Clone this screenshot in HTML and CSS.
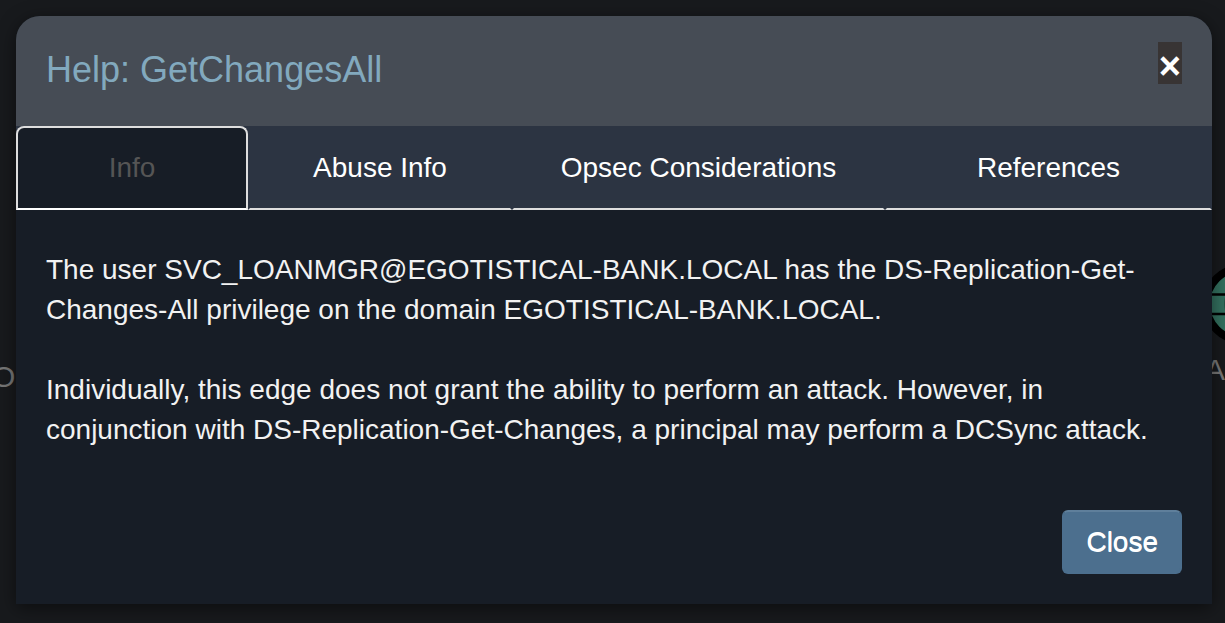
FILE: index.html
```html
<!DOCTYPE html>
<html lang="en">
<head>
<meta charset="utf-8">
<meta name="viewport" content="width=device-width, initial-scale=1">
<title>Help: GetChangesAll</title>
<link rel="stylesheet" href="styles.css">
</head>
<body>
<div class="graph" aria-hidden="true">
  <span class="node-label node-label-user">O</span>
  <svg class="node-icon" viewBox="0 0 80 80">
    <circle cx="40" cy="40" r="36" fill="#33705f" stroke="#000" stroke-width="8"/>
    <path d="M4 30.500H76M4 50H76M40 4V76" fill="none" stroke="#000" stroke-width="2.500"/>
    <ellipse cx="40" cy="40" rx="16" ry="36" fill="none" stroke="#000" stroke-width="2.500"/>
  </svg>
  <span class="node-label node-label-domain">A</span>
</div>
<div class="modal" role="dialog" aria-labelledby="title">
  <header class="modal-header">
    <h4 class="modal-title" id="title">Help: GetChangesAll</h4>
    <button class="dismiss" type="button" aria-label="Dismiss">×</button>
  </header>
  <nav class="tabs" role="tablist">
    <button class="tab active" type="button" role="tab" aria-selected="true">Info</button>
    <button class="tab" type="button" role="tab">Abuse Info</button>
    <button class="tab" type="button" role="tab">Opsec Considerations</button>
    <button class="tab" type="button" role="tab">References</button>
  </nav>
  <div class="modal-body">
    <p>The user SVC_LOANMGR@EGOTISTICAL-BANK.LOCAL has the DS-Replication-Get-Changes-All privilege on the domain EGOTISTICAL-BANK.LOCAL.</p>
    <p>Individually, this edge does not grant the ability to perform an attack. However, in conjunction with DS-Replication-Get-Changes, a principal may perform a DCSync attack.</p>
  </div>
  <footer class="modal-footer">
    <button class="btn" type="button">Close</button>
  </footer>
</div>
</body>
</html>
```
FILE: styles.css
```css
* {
  box-sizing: border-box;
}

body {
  margin: 0;
  padding: 16px 13px 19px 16px;
  min-height: 100vh;
  overflow: hidden;
  position: relative;
  background: #181a1d;
  color: #f2f2f2;
  font: 28px/40px "Liberation Sans", Arial, sans-serif;
}

button {
  margin: 0;
  font-family: inherit;
  cursor: pointer;
}

.graph {
  position: absolute;
  inset: 0;
  overflow: hidden;
}

.node-icon {
  position: absolute;
  left: 1202px;
  top: 264px;
  width: 80px;
  height: 80px;
}

.node-label {
  position: absolute;
  color: #777;
  font-size: 30px;
}

.node-label-user {
  left: -8px;
  top: 357px;
}

.node-label-domain {
  left: 1205px;
  top: 350px;
}

.modal {
  position: relative;
  background: #171d26;
  border-radius: 24px 24px 0 0;
  box-shadow: 0 4px 18px rgba(0, 0, 0, 0.5);
}

.modal-header {
  display: flex;
  justify-content: space-between;
  align-items: flex-start;
  padding: 26px 30px 30px;
  background: #464c55;
  border-radius: 24px 24px 0 0;
}

.modal-title {
  margin: 0;
  padding-top: 2px;
  color: #82a9be;
  font-size: 36px;
  font-weight: 400;
  line-height: 52px;
}

.dismiss {
  padding: 6px 1px 0;
  border: 0;
  background: #383434;
  color: #fff;
  font-size: 38px;
  font-weight: 700;
  line-height: 36px;
}

.tabs {
  display: grid;
  grid-template-columns: 232fr 264fr 373fr 327fr;
  background: #2c3442;
}

.tab {
  padding: 20px;
  border: 2px solid transparent;
  border-bottom-color: #dedede;
  background: none;
  color: #fff;
  font-size: 28px;
  line-height: 40px;
}

.tab.active {
  border-color: #dedede;
  border-bottom-color: #fff;
  border-radius: 8px 8px 0 0;
  background: #171d26;
  color: #555;
}

.modal-body {
  padding: 40px 30px 30px;
}

.modal-body p {
  margin: 0 0 40px;
}

.modal-body p:last-child {
  margin-bottom: 0;
}

.modal-footer {
  display: flex;
  justify-content: flex-end;
  padding: 30px;
}

.btn {
  padding: 10px 22px;
  border: 2px solid #4c6f8e;
  border-top-color: #5f7f9b;
  border-radius: 6px;
  background: #4c6f8e;
  color: #fff;
  font-size: 28px;
  line-height: 40px;
  text-shadow: 0 1px 0 #fff;
}
```
